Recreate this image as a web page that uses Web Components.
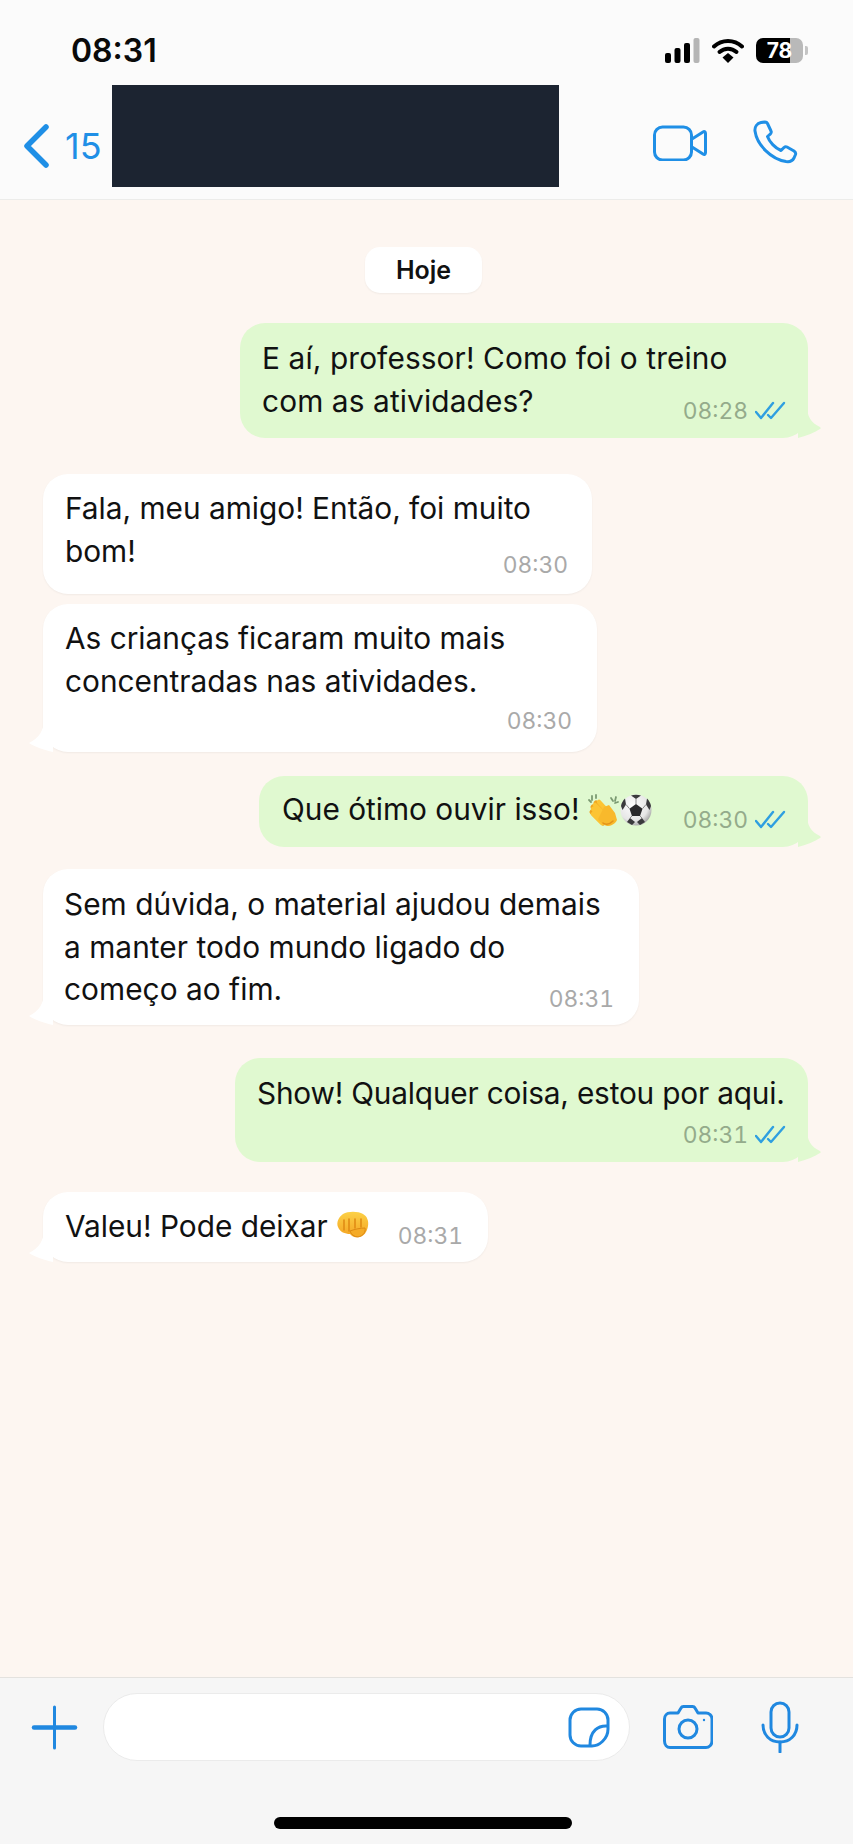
<!DOCTYPE html>
<html lang="pt">
<head>
<meta charset="utf-8">
<title>Conversa</title>
<style>
    html, body { margin: 0; padding: 0; background: #fdf6f1; }
    body { font-family: 'Inter', 'Liberation Sans', sans-serif; color: #111; }
    .app { width: 853px; height: 1844px; display: flex; flex-direction: column; overflow: hidden; }
    .emoji { display: inline-block; }
</style>
</head>
<body>
<div class="app">
    <wa-status></wa-status>
    <wa-header count="15"></wa-header>
    <wa-chat>
        <wa-day>Hoje</wa-day>
        <wa-bubble side="out" time="08:28" tail style="--w:568px;--mt:30px;--pt:14px;--pb:16px;--ml:22px;--mr:22px;--tb:13px;--ls:.12px">E aí, professor! Como foi o treino<br>com as atividades?</wa-bubble>
        <wa-bubble side="in" time="08:30" style="--w:549px;--mt:36px;--pt:13px;--pb:22px;--ml:22px;--mr:24px;--tb:15px">Fala, meu amigo! Então, foi muito<br>bom!</wa-bubble>
        <wa-bubble side="in" time="08:30" tail style="--w:554px;--mt:10px;--pt:13px;--pb:50px;--ml:22px;--mr:25px;--tb:17px">As crianças ficaram muito mais<br>concentradas nas atividades.</wa-bubble>
        <wa-bubble side="out" time="08:30" tail style="--w:549px;--mt:24px;--pt:12px;--pb:16.500px;--ml:23px;--mr:22px;--tb:13px">Que ótimo ouvir isso!
            <svg class="emoji" role="img" aria-label="👏" width="33" height="33" viewBox="0 0 33 33" style="margin-left:-1px;vertical-align:-7px">
                <g stroke-linecap="round" fill="none">
                    <path d="M9 9l12 13M6 13l12 12M5 18l11 11" stroke="#f0a41f" stroke-width="5"/>
                    <path d="M12 8l12 13M8 11l13 13M6 15l12 12M6 20l9 9" stroke="#fcc434" stroke-width="4.500"/>
                </g>
                <path d="M17 13l5-2 6 8 2 7c-2 4-6 6-10 6-4-1-7-4-9-7z" fill="#f8b92c"/>
                <path d="M26 27c-3 3-7 4-10 2" stroke="#e2921a" stroke-width="1.500" fill="none" stroke-linecap="round"/>
                <path d="M5 2v4M9 1v3M2 6l2 2M24 4l2 3M29 3l-1 4M31 8l-3 1" stroke="#7b9a72" stroke-width="1.800" stroke-linecap="round"/>
            </svg><svg class="emoji" role="img" aria-label="⚽" width="32" height="32" viewBox="0 0 32 32" style="vertical-align:-6px">
                <defs>
                    <radialGradient id="ball" cx="40%" cy="35%" r="70%">
                        <stop offset="0" stop-color="#fdfdfd"/><stop offset=".7" stop-color="#e6e6e6"/><stop offset="1" stop-color="#9f9f9f"/>
                    </radialGradient>
                </defs>
                <circle cx="16" cy="16" r="15.500" fill="url(#ball)"/>
                <path d="M16 10l6.500 4.700-2.500 7.300h-8l-2.500-7.300z" fill="#2a2a2c"/>
                <path d="M11 1.500c3-1 7-1 10 0l-5 3.500zM1 12c.5-3 2-5.500 4-7.500l1 6-3.500 5.500zM31 12c-.5-3-2-5.500-4-7.500l-1 6 3.500 5.500zM7 28l5 3 3-3-5-4zM25 28l-5 3-3-3 5-4z" fill="#3a3a3c"/>
                <path d="M16 10V5M9.500 14.700L6 10.500M22.500 14.700L26 10.500M12 22l-2 2M20 22l2 2" stroke="#8b8b8b" stroke-width="1"/>
            </svg></wa-bubble>
        <wa-bubble side="in" time="08:31" tail style="--w:596px;--mt:22px;--pt:14px;--pb:14.500px;--ml:21px;--mr:25px;--tb:12px;--ls:.05px">Sem dúvida, o material ajudou demais<br>a manter todo mundo ligado do<br>começo ao fim.</wa-bubble>
        <wa-bubble side="out" time="08:31" tail style="--w:573px;--mt:33px;--pt:14px;--pb:47.500px;--ml:22px;--mr:22px;--tb:13px;--ls:-.19px">Show! Qualquer coisa, estou por aqui.</wa-bubble>
        <wa-bubble side="in" time="08:31" tail style="--w:445px;--mt:30px;--pt:13px;--pb:14.500px;--ml:22px;--mr:25px;--tb:12px">Valeu! Pode deixar
            <svg class="emoji" role="img" aria-label="👊" width="33" height="27" viewBox="0 0 33 27" style="margin-left:0;vertical-align:-1px">
                <defs>
                    <linearGradient id="fist" x1="0" y1="0" x2="0" y2="1">
                        <stop offset="0" stop-color="#fcd146"/><stop offset="1" stop-color="#f4a323"/>
                    </linearGradient>
                </defs>
                <path d="M7 3c5-3 15-3 20 0 4 2 6 7 5 12-1 6-4 11-10 11-4 1-6-1-8-3-5 0-10-2-12-7-2-5 1-10 5-13z" fill="url(#fist)"/>
                <path d="M8 9v10M13 8v12M19 8v9M25 8v8" stroke="#e08c14" stroke-width="1.600" stroke-linecap="round"/>
                <path d="M14 20c5-2 11-3 15-3 1 4-2 8-7 9-4 0-7-3-8-6z" fill="#f5ab27" stroke="#dd8a14" stroke-width="1"/>
            </svg></wa-bubble>
    </wa-chat>
    <wa-composer></wa-composer>
</div>

<script>
class WaStatus extends HTMLElement {
    constructor() {
        super();
        this.attachShadow({mode: "open"});
        this.shadowRoot.innerHTML = `
            <style>
                :host {
                    display: flex;
                    height: 85px;
                    box-sizing: border-box;
                    padding: 31px 45px 0 71px;
                    justify-content: space-between;
                    align-items: flex-start;
                    background: #fbfbfb;
                }
                .time {
                    font: 600 32px/40px 'Inter', 'Liberation Sans', sans-serif;
                    color: #0a0a0a;
                }
                .icons { display: flex; align-items: center; height: 40px; margin-top: -1px; }
                svg { display: block; }
                .signal { margin-right: 12px; }
                .wifi { margin-right: 12px; }
                .battery {
                    width: 47px;
                    height: 25px;
                    border-radius: 7px;
                    overflow: hidden;
                    background: linear-gradient(90deg, #000 0, #000 72%, #b9b9b9 72%, #b9b9b9 100%);
                    color: #fff;
                    font: 700 21px/25px 'Inter', 'Liberation Sans', sans-serif;
                    text-align: center;
                }
                .nub { width: 3px; height: 9px; margin-left: 2px; background: #c4c4c4; border-radius: 0 2px 2px 0; }
            </style>
            <span class="time">08:31</span>
            <div class="icons">
                <svg class="signal" width="35" height="25" viewBox="0 0 35 25">
                    <rect x="0" y="15" width="6" height="10" rx="2" fill="#000"/>
                    <rect x="9.500" y="10" width="6" height="15" rx="2" fill="#000"/>
                    <rect x="19" y="5" width="6" height="20" rx="2" fill="#000"/>
                    <rect x="28.500" y="0" width="6" height="25" rx="2" fill="#b5b5b5"/>
                </svg>
                <svg class="wifi" width="32" height="25" viewBox="0 0 32 25">
                    <path d="M2 8.500C10 1 22 1 30 8.500" fill="none" stroke="#000" stroke-width="4" stroke-linecap="round"/>
                    <path d="M7.500 14C12.500 9.500 19.500 9.500 24.500 14" fill="none" stroke="#000" stroke-width="4" stroke-linecap="round"/>
                    <path d="M10.500 19.500L16 15l5.500 4.500L16 25z" fill="#000"/>
                </svg>
                <div class="battery">78</div>
                <div class="nub"></div>
            </div>
        `;
    }
}

class WaHeader extends HTMLElement {
    constructor() {
        super();
        this.attachShadow({mode: "open"});
        let count = this.getAttribute("count");
        this.shadowRoot.innerHTML = `
            <style>
                :host {
                    display: flex;
                    height: 115px;
                    box-sizing: border-box;
                    background: #fbfbfb;
                    border-bottom: 1px solid #ececea;
                    color: #1f8fe6;
                }
                .back {
                    display: flex;
                    align-items: center;
                    width: 112px;
                    height: 102px;
                    padding: 20px 0 0 22px;
                    box-sizing: border-box;
                    font: 400 36px/40px 'Inter', 'Liberation Sans', sans-serif;
                }
                .back svg { margin-right: 15px; flex: none; }
                .name { width: 447px; height: 102px; background: #1c2431; }
                .actions { display: flex; align-items: flex-start; margin-left: 94px; padding-top: 39px; gap: 46px; }
                svg { display: block; }
            </style>
            <div class="back">
                <svg width="28" height="44" viewBox="0 0 28 44"><path d="M24 3L5 22l19 19" fill="none" stroke="currentColor" stroke-width="5.500" stroke-linecap="round" stroke-linejoin="round"/></svg>
                <span>${count}</span>
            </div>
            <div class="name"></div>
            <div class="actions">
                <svg width="54" height="37" viewBox="0 0 54 37" fill="none" stroke="currentColor" stroke-width="3" stroke-linejoin="round">
                    <rect x="1.500" y="3" width="37" height="33" rx="8"/>
                    <path d="M39 15l11-7c1.500-1 2.500 0 2.500 1.500v19c0 1.500-1 2.500-2.500 1.500l-11-7"/>
                </svg>
                <svg width="46" height="44" viewBox="0 0 46 44" fill="none" stroke="currentColor" stroke-width="3" stroke-linejoin="round" style="margin-top:-4px">
                    <path d="M8 2.500L12 2c1 0 2 .5 2.500 1.500L18 11c.5 1 .2 2-.5 2.800l-3 2.700c2 5.500 7.500 11.500 13.500 14l3-3c1-.9 2-1 3-.5l7 4c1.500 1 2 2 1.500 3.500L41 38c-1.500 3-4.500 4-8 3.500C18 39 4 25 2 11c-.5-4 2-7.500 6-8.500z"/>
                </svg>
            </div>
        `;
    }
}

class WaChat extends HTMLElement {
    constructor() {
        super();
        this.attachShadow({mode: "open"});
        this.shadowRoot.innerHTML = `
            <style>
                :host {
                    display: flex;
                    flex-direction: column;
                    flex: 1;
                    padding-top: 47px;
                    background: #fdf6f1;
                }
            </style>
            <slot></slot>
        `;
    }
}

class WaDay extends HTMLElement {
    constructor() {
        super();
        this.attachShadow({mode: "open"});
        this.shadowRoot.innerHTML = `
            <style>
                :host {
                    display: block;
                    width: 117px;
                    height: 46px;
                    margin-left: 365px;
                    background: #fff;
                    border-radius: 15px;
                    box-shadow: 0 1px 2px rgba(0,0,0,.05);
                    font: 600 25px/46px 'Inter', 'Liberation Sans', sans-serif;
                    text-align: center;
                    color: #111;
                }
            </style>
            <slot></slot>
        `;
    }
}

class WaBubble extends HTMLElement {
    constructor() {
        super();
        this.attachShadow({mode: "open"});
        let out = this.getAttribute("side") == "out";
        let time = this.getAttribute("time");
        let ticks = out ? `<svg class="ticks" width="31" height="20" viewBox="0 0 31 20" fill="none" stroke="#2f9fe0" stroke-width="2.400" stroke-linecap="round" stroke-linejoin="round"><path d="M1 11l5 6L18 2"/><path d="M13 14l3 3L29 2"/></svg>` : "";
        let tail = "";
        if (this.hasAttribute("tail")) {
            tail = out
                ? `<svg class="tail" width="24" height="32" viewBox="0 0 24 32"><path d="M0 0h9c0 10 4 17 13 21 1 1 1 1.500 0 2-6 4-14 7-22 9z" fill="currentColor"/></svg>`
                : `<svg class="tail" width="24" height="32" viewBox="0 0 24 32"><path d="M24 0h-9c0 10-5 18-15 23 6 4 15 7 24 9z" fill="currentColor"/></svg>`;
        }
        this.shadowRoot.innerHTML = `
            <style>
                :host {
                    display: grid;
                    position: relative;
                    box-sizing: border-box;
                    width: var(--w);
                    margin-top: var(--mt);
                    padding: var(--pt) var(--mr) 0 var(--ml);
                    border-radius: 25px;
                    font: 400 29.800px/42.500px 'Inter', 'Liberation Sans', sans-serif;
                    color: #111;
                }
                :host([side="out"]) { background: #e0f9d0; margin-left: calc(808px - var(--w)); }
                :host([side="in"]) { background: #fff; margin-left: 43px; box-shadow: 0 1px 2px rgba(0,0,0,.05); }
                .text { grid-area: 1 / 1; padding-bottom: var(--pb); white-space: nowrap; letter-spacing: var(--ls, 0); }
                .meta {
                    grid-area: 1 / 1;
                    align-self: end;
                    justify-self: end;
                    display: flex;
                    align-items: center;
                    gap: 7px;
                    height: 28px;
                    margin-bottom: var(--tb);
                    font-size: 22.800px;
                    line-height: 28px;
                    font-variant-numeric: tabular-nums;
                    color: #a9a9a9;
                }
                :host([side="out"]) .meta { color: #94ab8b; }
                .ticks { display: block; }
                .tail { position: absolute; bottom: 0; color: #fff; }
                :host([side="out"]) .tail { right: -14px; color: #e0f9d0; }
                :host([side="in"]) .tail { left: -14px; }
            </style>
            ${tail}
            <div class="text"><slot></slot></div>
            <div class="meta"><span>${time}</span>${ticks}</div>
        `;
    }
}

class WaComposer extends HTMLElement {
    constructor() {
        super();
        this.attachShadow({mode: "open"});
        this.shadowRoot.innerHTML = `
            <style>
                :host {
                    display: block;
                    height: 167px;
                    box-sizing: border-box;
                    background: #f6f6f6;
                    border-top: 1px solid #e4e2df;
                    color: #2088e0;
                }
                .row { display: flex; align-items: center; height: 68px; margin-top: 15px; padding-left: 31px; }
                .plus { margin-right: 25px; }
                .input {
                    display: flex;
                    align-items: center;
                    justify-content: flex-end;
                    box-sizing: border-box;
                    width: 527px;
                    height: 68px;
                    padding-right: 19px;
                    background: #fff;
                    border: 1px solid #ebebeb;
                    border-radius: 34px;
                    margin-right: 33px;
                }
                .camera { margin-right: 48px; }
                svg { display: block; flex: none; }
                .home { width: 298px; height: 12px; margin: 56px 0 0 274px; border-radius: 6px; background: #000; }
            </style>
            <div class="row">
                <svg class="plus" width="47" height="47" viewBox="0 0 47 47"><path d="M23.500 3v41" stroke="currentColor" stroke-width="3" stroke-linecap="round"/><path d="M3 23.500h41" stroke="currentColor" stroke-width="4.500" stroke-linecap="round"/></svg>
                <div class="input">
                    <svg width="42" height="41" viewBox="0 0 42 41" fill="none" stroke="currentColor" stroke-width="3" stroke-linejoin="round">
                        <path d="M13 2h16c6 0 11 5 11 11v9c0 10-9 17-16 17h-11C7 39 2 34 2 28V13C2 7 7 2 13 2z"/>
                        <path d="M40 19c-10-1-18 5-18 19"/>
                    </svg>
                </div>
                <svg class="camera" width="50" height="44" viewBox="0 0 50 44" fill="none" stroke="currentColor" stroke-width="3" stroke-linejoin="round">
                    <path d="M7 8h8l3-5c.5-1 1-1.500 2.500-1.500h9c1.500 0 2 .5 2.500 1.500l3 5h8c3 0 6 2.500 6 6v22c0 4-3 6.500-6 6.500H7c-3 0-5.500-2.500-5.500-6.500V14C1.500 10.500 4 8 7 8z"/>
                    <circle cx="25" cy="24" r="9"/>
                    <circle cx="41" cy="15" r="1.200" fill="currentColor" stroke="none"/>
                </svg>
                <svg width="38" height="52" viewBox="0 0 38 52" fill="none" stroke="currentColor" stroke-width="3" stroke-linecap="round" stroke-linejoin="round">
                    <rect x="10" y="2" width="18" height="34" rx="9"/>
                    <path d="M2 24c0 10 7 17 17 17s17-7 17-17"/>
                    <path d="M19 41v10"/>
                </svg>
            </div>
            <div class="home"></div>
        `;
    }
}

window.customElements.define('wa-status', WaStatus);
window.customElements.define('wa-header', WaHeader);
window.customElements.define('wa-chat', WaChat);
window.customElements.define('wa-day', WaDay);
window.customElements.define('wa-bubble', WaBubble);
window.customElements.define('wa-composer', WaComposer);
</script>
</body>
</html>
